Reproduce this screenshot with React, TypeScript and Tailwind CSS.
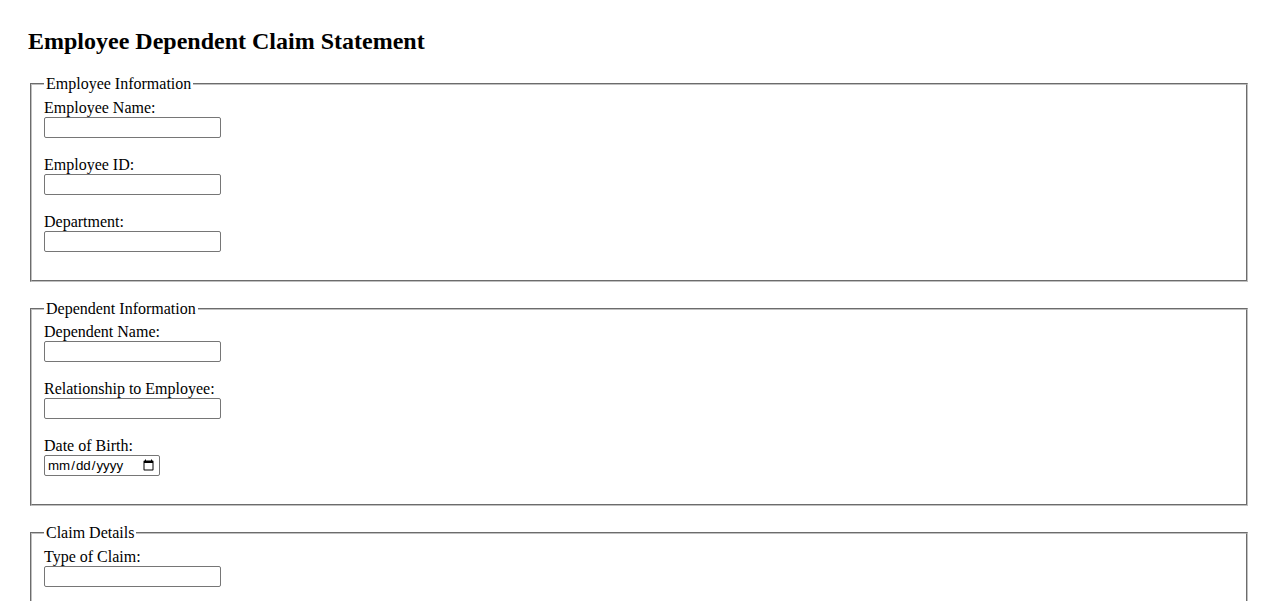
import React from "react";

const inputCls =
  "w-[177px] h-[21px] border border-[#767676] rounded-[2px] px-[2px] py-[1px] bg-white text-[13.33px] font-['Liberation_Sans',sans-serif] align-baseline";

function Field({ label, type = "text" }: { label: string; type?: string }) {
  return (
    <>
      <label>{label}</label>
      <br />
      {type === "date" ? (
        <input
          type="date"
          className="w-[116px] h-[21px] border border-[#767676] rounded-[2px] pl-[2px] pr-[2px] bg-white text-[13.33px] font-['Liberation_Sans',sans-serif]"
        />
      ) : (
        <input type={type} className={inputCls} />
      )}
      <br />
      <br />
    </>
  );
}

export default function App() {
  return (
    <div className="min-h-screen bg-white px-[28px] pt-[28px] pb-[28px] font-['Liberation_Serif',serif] text-[16px] leading-[normal] text-black">
      <h2 className="mb-[20px] text-[24px] font-bold leading-[normal]">
        Employee Dependent Claim Statement
      </h2>
      <form>
        <fieldset className="mx-[2px] mb-[18px] border-2 [border-style:groove] border-[#c0c0c0] px-[12px] pt-[5.6px] pb-[10px]">
          <legend className="px-[2px]">Employee Information</legend>
          <Field label="Employee Name:" />
          <Field label="Employee ID:" />
          <Field label="Department:" />
        </fieldset>

        <fieldset className="mx-[2px] mb-[18px] border-2 [border-style:groove] border-[#c0c0c0] px-[12px] pt-[5.6px] pb-[10px]">
          <legend className="px-[2px]">Dependent Information</legend>
          <Field label="Dependent Name:" />
          <Field label="Relationship to Employee:" />
          <Field label="Date of Birth:" type="date" />
        </fieldset>

        <fieldset className="mx-[2px] mb-[18px] border-2 [border-style:groove] border-[#c0c0c0] px-[12px] pt-[5.6px] pb-[10px]">
          <legend className="px-[2px]">Claim Details</legend>
          <Field label="Type of Claim:" />
          <Field label="Claim Amount:" />
          <Field label="Date of Service:" type="date" />
        </fieldset>

        <button
          type="submit"
          className="border border-[#767676] rounded-[2px] bg-[#efefef] px-[6px] py-[1px] text-[13.33px] font-['Liberation_Sans',sans-serif]"
        >
          Submit Claim
        </button>
      </form>
    </div>
  );
}
